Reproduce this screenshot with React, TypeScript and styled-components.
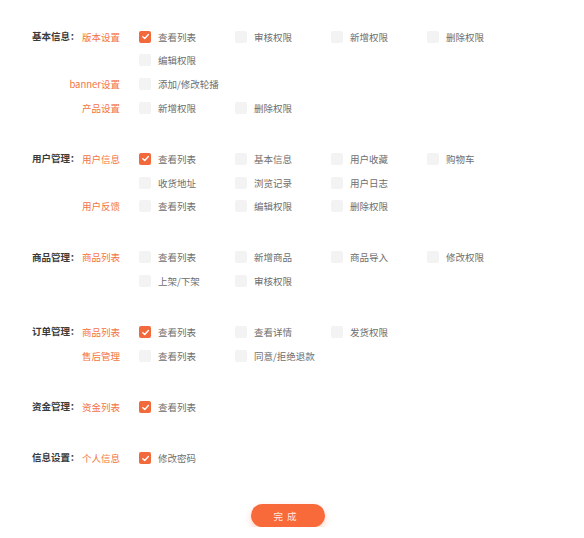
import React from "react";
import styled, { createGlobalStyle } from "styled-components";

const Global = createGlobalStyle`
  html, body { margin: 0; padding: 0; background: #ffffff; }
  body { font-family: "Noto Sans CJK SC", "Noto Sans", sans-serif; }
`;

type Opt = { label: string; checked?: boolean };
type Sub = { name: string; rows: Opt[][] };
type Group = { title: string; subs: Sub[] };

const data: Group[] = [
  {
    title: "基本信息：",
    subs: [
      {
        name: "版本设置",
        rows: [
          [{ label: "查看列表", checked: true }, { label: "审核权限" }, { label: "新增权限" }, { label: "删除权限" }],
          [{ label: "编辑权限" }],
        ],
      },
      { name: "banner设置", rows: [[{ label: "添加/修改轮播" }]] },
      { name: "产品设置", rows: [[{ label: "新增权限" }, { label: "删除权限" }]] },
    ],
  },
  {
    title: "用户管理：",
    subs: [
      {
        name: "用户信息",
        rows: [
          [{ label: "查看列表", checked: true }, { label: "基本信息" }, { label: "用户收藏" }, { label: "购物车" }],
          [{ label: "收货地址" }, { label: "浏览记录" }, { label: "用户日志" }],
        ],
      },
      { name: "用户反馈", rows: [[{ label: "查看列表" }, { label: "编辑权限" }, { label: "删除权限" }]] },
    ],
  },
  {
    title: "商品管理：",
    subs: [
      {
        name: "商品列表",
        rows: [
          [{ label: "查看列表" }, { label: "新增商品" }, { label: "商品导入" }, { label: "修改权限" }],
          [{ label: "上架/下架" }, { label: "审核权限" }],
        ],
      },
    ],
  },
  {
    title: "订单管理：",
    subs: [
      { name: "商品列表", rows: [[{ label: "查看列表", checked: true }, { label: "查看详情" }, { label: "发货权限" }]] },
      { name: "售后管理", rows: [[{ label: "查看列表" }, { label: "同意/拒绝退款" }]] },
    ],
  },
  {
    title: "资金管理：",
    subs: [{ name: "资金列表", rows: [[{ label: "查看列表", checked: true }]] }],
  },
  {
    title: "信息设置：",
    subs: [{ name: "个人信息", rows: [[{ label: "修改密码", checked: true }]] }],
  },
];

const ROW = 23.67;

const Page = styled.div`
  padding: 25px 0 0 32px;
  width: 584px;
  box-sizing: border-box;
`;

const Section = styled.div`
  display: flex;
  margin-bottom: 27.5px;
`;

const GroupTitle = styled.div`
  width: 48px;
  height: ${ROW}px;
  line-height: ${ROW}px;
  font-size: 9.5px;
  font-weight: 700;
  color: #3a3a3a;
  white-space: nowrap;
`;

const SubList = styled.div`
  display: flex;
  flex-direction: column;
`;

const SubRow = styled.div`
  display: flex;
`;

const SubName = styled.div`
  width: 40px;
  height: ${ROW}px;
  display: flex;
  align-items: center;
  justify-content: flex-end;
  font-size: 9.5px;
  color: #f37442;
  white-space: nowrap;
`;

const OptionGrid = styled.div`
  margin-left: 19px;
  display: flex;
  flex-direction: column;
`;

const OptionRow = styled.div`
  display: grid;
  grid-template-columns: repeat(4, 96px);
  height: ${ROW}px;
`;

const Option = styled.label`
  display: flex;
  align-items: center;
  gap: 7px;
  font-size: 9.5px;
  color: #6e6e6e;
  white-space: nowrap;
`;

const Box = styled.span<{ $checked?: boolean }>`
  width: 12px;
  height: 12px;
  border-radius: 2px;
  background: ${(p) => (p.$checked ? "#f26a3b" : "#f3f3f4")};
  display: inline-flex;
  align-items: center;
  justify-content: center;
  flex-shrink: 0;
`;

const Footer = styled.div`
  display: flex;
  justify-content: center;
  padding: 6.6px 8px 0 0;
  margin-left: -32px;
`;

const DoneButton = styled.button`
  width: 74px;
  height: 23px;
  border: none;
  border-radius: 12px;
  background: #f96a3b;
  color: #ffe9e0;
  font-family: "Noto Sans CJK SC", sans-serif;
  font-size: 9.5px;
  letter-spacing: 4px;
  padding-left: 4px;
  box-shadow: 0 3px 6px rgba(249, 106, 59, 0.3);
  cursor: pointer;
`;

const Check = () => (
  <svg width="9" height="9" viewBox="0 0 10 10">
    <path d="M2 5.2 L4.2 7.3 L8.2 2.8" fill="none" stroke="#fff" strokeWidth="1.5" strokeLinecap="round" strokeLinejoin="round" />
  </svg>
);

export default function App() {
  return (
    <>
      <Global />
      <Page>
        {data.map((g, gi) => (
          <Section key={gi}>
            <GroupTitle>{g.title}</GroupTitle>
            <SubList>
              {g.subs.map((s, si) => (
                <SubRow key={si}>
                  <SubName>{s.name}</SubName>
                  <OptionGrid>
                    {s.rows.map((r, ri) => (
                      <OptionRow key={ri}>
                        {r.map((o, oi) => (
                          <Option key={oi}>
                            <Box $checked={o.checked}>{o.checked && <Check />}</Box>
                            {o.label}
                          </Option>
                        ))}
                      </OptionRow>
                    ))}
                  </OptionGrid>
                </SubRow>
              ))}
            </SubList>
          </Section>
        ))}
        <Footer>
          <DoneButton>完成</DoneButton>
        </Footer>
      </Page>
    </>
  );
}
